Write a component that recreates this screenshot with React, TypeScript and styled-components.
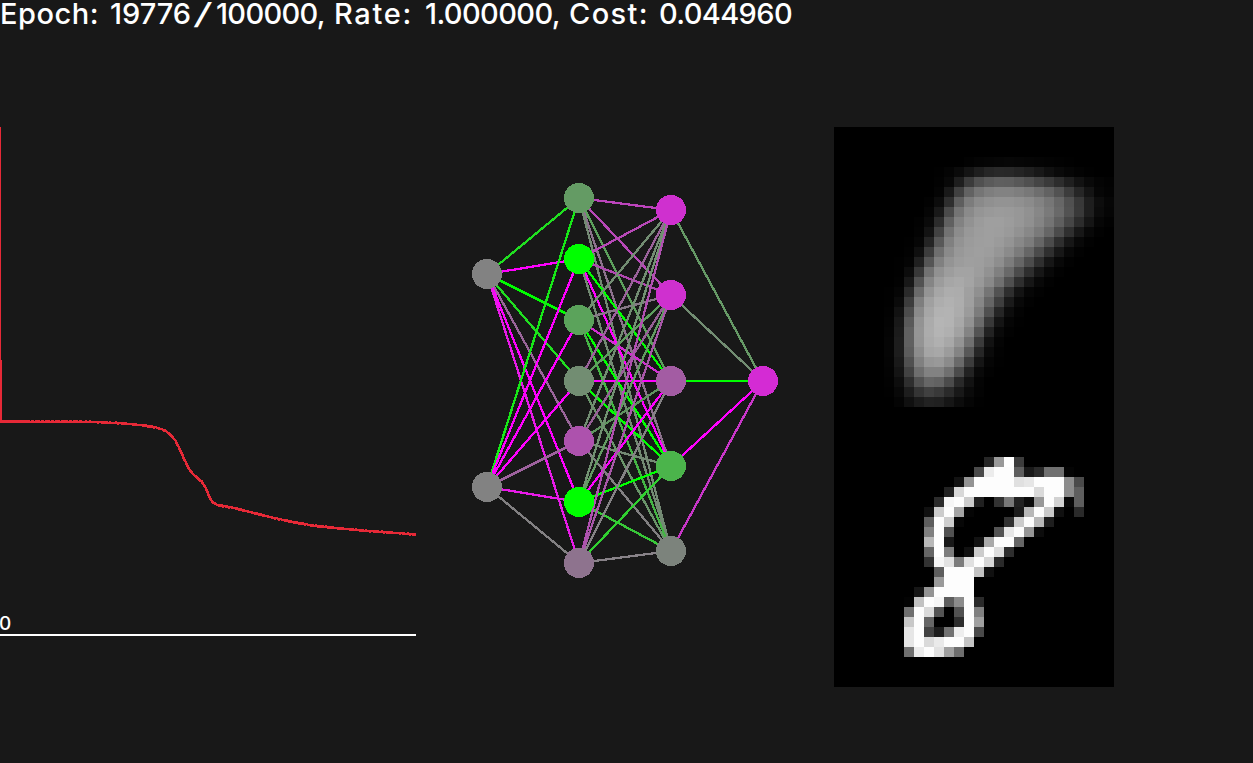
import React, { useLayoutEffect, useRef } from "react";
import styled, { createGlobalStyle } from "styled-components";

const GlobalStyle = createGlobalStyle`
  body { margin: 0; background: #181818; overflow: hidden; }
`;

const Window = styled.main`
  width: 1253px;
  height: 763px;
  background: #181818;
  display: flex;
  flex-direction: column;
  font-family: Inter, "DejaVu Sans", sans-serif;
  font-weight: 500;
  color: #fff;
`;

const StatusBar = styled.header`
  height: 127px;
  display: flex;
  align-items: flex-start;
`;

const Word = styled.span<{ $width: number; $gap: number; $stretch?: number }>`
  flex: none;
  width: ${(p) => p.$width}px;
  margin-right: ${(p) => p.$gap}px;
  line-height: 27px;
  font-size: 29px;
  white-space: nowrap;
  display: flex;
  justify-content: ${(p) => (p.$stretch ? "center" : "flex-start")};
  font-weight: ${(p) => (p.$stretch ? 300 : 500)};
  transform: ${(p) => (p.$stretch ? `scaleX(${p.$stretch})` : "none")};
`;

const Panels = styled.div`
  display: grid;
  grid-template-columns: 417px 417px 280px;
  height: 560px;
`;

const ChartPanel = styled.section`
  display: flex;
  flex-direction: column;
  width: 416px;
`;

const AxisLabel = styled.div`
  height: 18px;
  box-sizing: border-box;
  padding-top: 1px;
  line-height: 14px;
  font-size: 19px;
  margin-left: -1px;
`;

const Axis = styled.div`
  height: 2px;
  background: #fff;
`;

const Drawing = styled.svg`
  display: block;
  shape-rendering: crispEdges;
`;

const Previews = styled.section`
  display: flex;
  flex-direction: column;
  background: #000;
`;

type Run = { text: string; width: number; gap?: number; stretch?: number };

const status: Run[] = [
  { text: "Epoch:", width: 99, gap: 11 },
  { text: "19776", width: 81 },
  { text: "/", width: 24, gap: 1, stretch: 2.1 },
  { text: "100000,", width: 109, gap: 9 },
  { text: "Rate:", width: 79, gap: 12 },
  { text: "1.000000,", width: 135, gap: 9 },
  { text: "Cost:", width: 80, gap: 10 },
  { text: "0.044960", width: 133 },
];

// Tracks the letters so that the run fills its width exactly.
function FittedWord({ text, width, gap = 0, stretch }: Run) {
  const ref = useRef<HTMLSpanElement>(null);
  useLayoutEffect(() => {
    const el = ref.current;
    if (!el || stretch) return;
    el.style.letterSpacing = "0px";
    const natural = el.getBoundingClientRect().width;
    el.style.letterSpacing = `${(width - natural) / text.length}px`;
  }, [text, width, stretch]);
  return (
    <Word $width={width} $gap={gap} $stretch={stretch}>
      <span ref={ref}>{text}</span>
    </Word>
  );
}

const cost: [number, number][] = [
  [1.5, 421.5], [65, 421.6], [97, 422], [125, 423.5],
  [145, 425.5], [158, 428], [163, 429.8], [168, 432.5], [172, 436.5], [175, 440], [178, 445.5],
  [181, 452], [185, 461], [190, 470.5], [195, 476], [202, 482], [204, 485], [206, 488.5],
  [209, 496], [211, 500], [213, 502.5], [217, 505], [232, 507.5], [250, 512], [272, 517.5],
  [290, 521.5], [312, 525.5], [340, 528.5], [375, 531.5], [416, 534.5],
];

function costPoints() {
  const points = ["0,127", "0,300", "0.5,415"];
  for (let k = 0; k < cost.length - 1; k++) {
    const [x0, y0] = cost[k];
    const [x1, y1] = cost[k + 1];
    for (let x = x0; x < x1; x += 1) {
      const noise = Math.sin(x * 12.9) * Math.sin(x * 4.7) * 0.5;
      points.push(`${x},${(y0 + ((y1 - y0) * (x - x0)) / (x1 - x0) + noise).toFixed(2)}`);
    }
  }
  points.push("416,534.5");
  return points.join(" ");
}

type Neuron = { y: number; color: string };
const layers: { x: number; neurons: Neuron[] }[] = [
  { x: 487, neurons: [{ y: 274, color: "#828282" }, { y: 487, color: "#828282" }] },
  {
    x: 579,
    neurons: [
      { y: 198, color: "#649b64" }, { y: 259, color: "#00ff00" }, { y: 320, color: "#5ba35b" },
      { y: 381, color: "#728d72" }, { y: 441, color: "#ad52ad" }, { y: 502, color: "#00ff00" },
      { y: 563, color: "#8e738e" },
    ],
  },
  {
    x: 671,
    neurons: [
      { y: 210, color: "#cf30cf" }, { y: 295, color: "#cf30cf" }, { y: 381, color: "#a35ca3" },
      { y: 466, color: "#4bb44b" }, { y: 551, color: "#7c837c" },
    ],
  },
  { x: 763, neurons: [{ y: 381, color: "#d42bd4" }] },
];

const weights: string[][][] = [
  [
    ["#20df20", "#ff00ff", "#00ff00", "#20df20", "#9a659a", "#ff00ff", "#e81ae8"],
    ["#17e817", "#ff00ff", "#ff00ff", "#ff00ff", "#9e629e", "#e81ae8", "#828082"],
  ],
  [
    ["#bc44bc", "#b848b8", "#5ca05c", "#8c728c", "#748a74"],
    ["#b848b8", "#b048b0", "#00ff00", "#ff00ff", "#728a72"],
    ["#728d72", "#867886", "#d030d0", "#00ff00", "#45b545"],
    ["#9a629a", "#5e9f5e", "#ff00ff", "#00ff00", "#6a956a"],
    ["#728d72", "#965f96", "#5f955f", "#748a74", "#828082"],
    ["#729272", "#629b62", "#ff00ff", "#00ff00", "#38c838"],
    ["#b050b0", "#a857a8", "#848284", "#30d030", "#888288"],
  ],
  [["#669a66"], ["#728d72"], ["#00ff00"], ["#ff00ff"], ["#c936c9"]],
];

function Network() {
  return (
    <Drawing width={417} height={560} viewBox="417 127 417 560">
      {weights.map((m, l) =>
        m.map((row, i) =>
          row.map((color, j) => {
            const y1 = layers[l].neurons[i].y;
            const y2 = layers[l + 1].neurons[j].y;
            return (
              <line
                key={`${l}-${i}-${j}`}
                x1={layers[l].x}
                y1={y1}
                x2={layers[l + 1].x}
                y2={y2}
                stroke={color}
                strokeWidth={y1 === y2 ? 2 : 2.3}
              />
            );
          })
        )
      )}
      {layers.map((layer) =>
        layer.neurons.map((n) => (
          <circle key={`${layer.x}-${n.y}`} cx={layer.x} cy={n.y} r={15} fill={n.color} />
        ))
      )}
    </Drawing>
  );
}

// Each entry: row, first column, then grey levels as hex bytes.
type PixelRow = [number, number, string];

const predicted: PixelRow[] = [
  [3, 13, "02 04 05 06 07 06 05 04 03 02 01"],
  [4, 10, "01 04 0a 14 1e 26 29 28 24 1f 18 10 0a 06 03 01"],
  [5, 10, "02 08 1e 3b 50 5a 5f 5e 58 50 45 3a 2d 1f 12 09 04 02"],
  [6, 10, "04 19 40 62 75 7e 82 82 7e 78 6e 62 52 3c 26 14 06 03"],
  [7, 9, "02 0c 2e 5e 7c 8a 90 93 93 90 8b 82 76 66 50 38 1e 0d 06"],
  [8, 9, "05 19 4a 74 8a 95 99 9b 9a 97 91 87 7a 69 52 39 1e 0b 05"],
  [9, 8, "02 0a 2c 60 82 92 9b 9f 9f 9c 97 90 84 74 5f 46 2c 15 06 02"],
  [10, 8, "03 13 42 72 8c 98 9d 9f 9e 9a 92 88 7a 66 4b 2f 17 08 02"],
  [11, 7, "01 06 24 58 80 93 9b 9e 9f 9b 94 88 7c 66 4b 2e 16 08 02"],
  [12, 7, "02 0f 3c 6e 8a 98 9d 9f 9d 96 8b 7b 66 4b 2f 17 08 02"],
  [13, 6, "01 04 20 55 80 94 9c 9f 9e 99 8e 7c 66 4c 2f 16 08 02"],
  [14, 6, "01 0c 38 72 91 9d a3 a3 9d 92 80 69 4b 2e 16 08 02"],
  [15, 6, "02 18 52 85 9c a6 a9 a4 99 89 70 4f 2e 16 08 02"],
  [16, 5, "01 05 2a 6a 94 a6 ad ac a0 90 75 52 2e 13 06 02"],
  [17, 5, "01 0a 3c 7e a0 ad b1 ad 9f 87 65 3e 1a 08 02"],
  [18, 5, "02 12 4c 8a a6 b2 b3 ac 9b 7c 50 25 0c 03"],
  [19, 5, "03 18 59 93 ab b5 b3 a8 92 6b 38 14 05 01"],
  [20, 5, "04 1b 60 95 ac b4 b0 a2 84 54 22 09 02"],
  [21, 5, "05 1d 60 94 aa b0 a8 94 70 3b 12 04"],
  [22, 5, "05 1d 5c 8c a5 a8 9c 84 58 26 0a 02"],
  [23, 5, "04 19 50 80 96 99 8b 6a 3c 15 05 01"],
  [24, 5, "03 14 42 6e 82 82 70 4b 22 09 02"],
  [25, 5, "02 0d 2e 52 66 62 4b 29 12 04"],
  [26, 5, "01 08 1d 34 40 39 2a 18 0a 03"],
  [27, 6, "04 10 1b 22 20 16 0c 05 01"],
];

const sample: PixelRow[] = [
  [5, 15, "26 9a ff 3c"],
  [6, 14, "4a ec fd fd 5e 19 2a 70 70 04"],
  [7, 12, "12 94 fd fd fd fd e0 e6 fd fd fd 8c 4a"],
  [8, 11, "22 d8 fd fd fd fd fd fd fd da fd fd 8c 5e"],
  [9, 10, "2c f6 fd cc 20 00 32 78 22 0c 98 fd d2 08 5e"],
  [10, 9, "10 cc fd a4 05 00 00 00 00 1c b8 fd ca 10 00 2a"],
  [11, 9, "5e fd ce 07 00 00 00 00 32 cc fd b8 1e"],
  [12, 9, "80 fd 52 00 00 00 00 54 e8 fd 96 0c"],
  [13, 9, "b8 fd 18 00 00 12 aa fd fd 66"],
  [14, 9, "66 fd 7c 00 10 cc fd de 2e"],
  [15, 9, "32 f6 e2 7c e0 fd d6 2a"],
  [16, 10, "5e fd fd fd c2 10"],
  [17, 10, "9a fd fd fd"],
  [18, 8, "16 94 fd fd fd fd"],
  [19, 7, "03 c2 fd f6 5e 8c fd 2a"],
  [20, 7, "70 fd da 54 00 52 fd 80"],
  [21, 7, "c8 fd 66 00 00 2e fd a0"],
  [22, 7, "e6 fd 42 1c 72 ee fd 4a"],
  [23, 7, "e6 fd da ea fd fd c4"],
  [24, 7, "70 ec fd e2 a0 6e"],
];

function DigitImage({ rows }: { rows: PixelRow[] }) {
  return (
    <Drawing width={280} height={280} viewBox="0 0 28 28">
      {rows.map(([y, x0, values]) =>
        values.split(" ").map((v, i) => (
          <rect key={`${y}-${i}`} x={x0 + i} y={y} width={1} height={1} fill={`#${v}${v}${v}`} />
        ))
      )}
    </Drawing>
  );
}

export default function App() {
  return (
    <Window>
      <GlobalStyle />
      <StatusBar>
        {status.map((run, i) => (
          <FittedWord key={i} {...run} />
        ))}
      </StatusBar>
      <Panels>
        <ChartPanel>
          <Drawing width={416} height={489} viewBox="0 127 416 489">
            <polyline points={costPoints()} fill="none" stroke="#e62937" strokeWidth={2.5} />
          </Drawing>
          <AxisLabel>0</AxisLabel>
          <Axis />
        </ChartPanel>
        <Network />
        <Previews>
          <DigitImage rows={predicted} />
          <DigitImage rows={sample} />
        </Previews>
      </Panels>
    </Window>
  );
}
